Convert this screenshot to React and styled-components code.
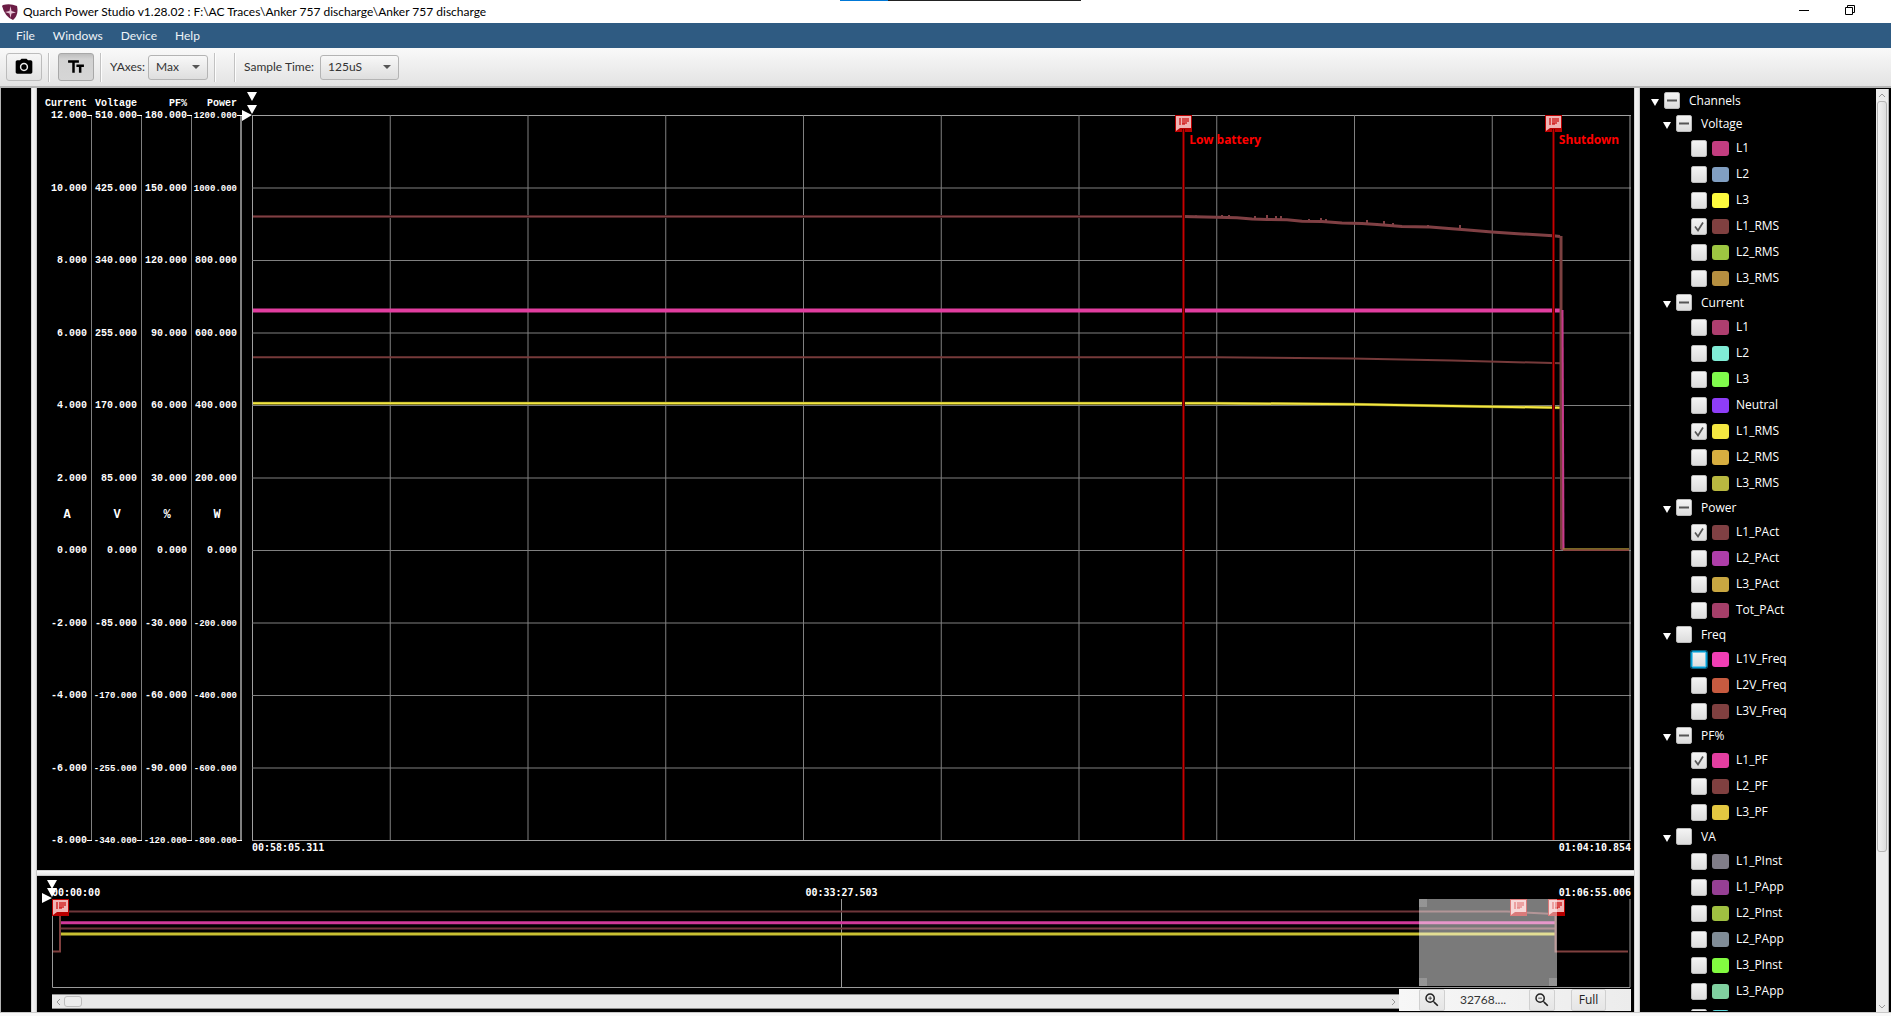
import React, { useState } from 'react';
import styled, { createGlobalStyle } from 'styled-components';
import { MdCameraAlt, MdTextFields, MdZoomIn, MdZoomOut } from 'react-icons/md';

const GlobalStyle = createGlobalStyle`
  * {
    box-sizing: border-box;
  }

  body {
    margin: 0;
    background: #f8f8f8;
    font-family: "Open Sans", "Noto Sans", sans-serif;
    font-size: 12px;
    line-height: 16px;
    overflow: hidden;
  }

  button, select, input {
    font: inherit;
    margin: 0;
  }
`

const Window = styled.div`
  display: flex;
  flex-direction: column;
  height: 100vh;
  padding-bottom: 3px;
`

const TitleBar = styled.header`
  position: relative;
  display: flex;
  align-items: center;
  height: 23px;
  flex: none;
  padding-left: 2px;
  background: #fff;
  color: #000;
  overflow: hidden;
`

const TitleText = styled.h1`
  flex: 1;
  margin: 0 0 0 5px;
  font-size: 12px;
  font-weight: 400;
  font-family: Lato, "Open Sans", sans-serif;
`

const DragStrip = styled.div`
  position: absolute;
  top: 0;
  left: 44.4%;
  width: 241px;
  height: 1px;
  background: linear-gradient(to right, #0078d7 48px, #222 48px);
`

const WindowButtons = styled.div`
  display: flex;
  margin-right: -28px;
  padding-bottom: 3px;
`

const WindowButton = styled.button`
  width: 46px;
  height: 20px;
  padding: 0;
  border: none;
  background: none;

  svg {
    display: block;
    margin: 0 auto;
  }
`

const MenuBar = styled.nav`
  display: flex;
  align-items: center;
  flex: none;
  height: 25px;
  padding-left: 7px;
  background: #2f5b82;
`

const MenuButton = styled.button`
  padding: 0 9px;
  border: none;
  background: none;
  color: #eef3f7;
  font-family: Lato, "Open Sans", sans-serif;
`

const Toolbar = styled.div`
  display: flex;
  align-items: center;
  flex: none;
  height: 40px;
  padding: 0 6px;
  border-bottom: 2px solid #b4b4b4;
  background: linear-gradient(#f9f9f9, #e3e3e3);
  color: #333;
  font-family: Lato, "Open Sans", sans-serif;
`

const ToolButton = styled.button`
  display: flex;
  align-items: center;
  justify-content: center;
  width: 36px;
  height: 28px;
  padding: 0;
  border: 1px solid ${props => props.$pressed ? '#a8a8a8' : '#bcbcbc'};
  border-radius: 3px;
  background: ${props => props.$pressed ? 'linear-gradient(#bdbdbd, #d2d2d2 20%, #d6d6d6)' : 'linear-gradient(#f6f6f6, #e2e2e2)'};
  color: #000;
`

const Separator = styled.div`
  width: 2px;
  height: 29px;
  margin: 0 ${props => props.$right || 8}px 0 6px;
  border-left: 1px solid #c2c2c2;
  border-right: 1px solid #fdfdfd;
`

const ToolLabel = styled.label`
  min-width: ${props => props.$width}px;
  margin-right: 3px;
`

const ComboBox = styled.div`
  display: grid;
  align-items: center;
  width: ${props => props.$width}px;
  height: 25px;

  select, svg {
    grid-area: 1 / 1;
  }

  svg {
    justify-self: end;
    margin-right: 8px;
    pointer-events: none;
  }
`

const ComboSelect = styled.select`
  width: 100%;
  height: 25px;
  padding: 0 7px;
  appearance: none;
  border: 1px solid #b4b4b4;
  border-radius: 3px;
  background: linear-gradient(#f8f8f8, #dedede);
  color: #333;
`

const Main = styled.main`
  display: flex;
  flex: 1;
  min-height: 0;
  border-left: 1px solid #b4b4b4;
  border-bottom: 1px solid #c8c8c8;
  background: #000;
`

const SidePanel = styled.div`
  width: 30px;
  flex: none;
`

const VerticalDivider = styled.div`
  width: 6px;
  flex: none;
  background: linear-gradient(to right, #bdbdbd, #f4f4f4 20%, #e8e8e8 80%, #b4b4b4);
`

const HorizontalDivider = styled.div`
  height: 6px;
  flex: none;
  background: linear-gradient(#bdbdbd, #fafafa 20%, #e8e8e8 80%, #b4b4b4);
`

const Charts = styled.div`
  display: flex;
  flex-direction: column;
  flex: 1;
  min-width: 0;
`

const TracePanel = styled.section`
  display: flex;
  flex: 1;
  min-height: 0;
  padding-right: 3px;
`

const Axes = styled.div`
  display: flex;
  padding: 10px 10px 0 5px;
  color: #fff;
  font-family: "Liberation Mono", "Courier New", monospace;
  font-weight: 700;
`

const Axis = styled.div`
  display: flex;
  flex-direction: column;
  width: 50px;
  padding-bottom: 23px;
`

const AxisTitle = styled.div`
  height: 12px;
  padding-right: 5px;
  font-size: 10px;
  line-height: 12px;
  text-align: right;
`

const AxisBody = styled.div`
  display: flex;
  flex: 1;
  justify-content: flex-end;
`

const AxisLabels = styled.div`
  display: flex;
  flex-direction: column;
  flex: 1;
  justify-content: space-between;
`

const AxisLabel = styled.div`
  height: 12px;
  font-size: ${props => props.$long ? 9 : 10}px;
  line-height: 12px;
  text-align: right;
  white-space: nowrap;
`

const AxisUnit = styled.div`
  height: 12px;
  padding-left: 5px;
  font-size: 12px;
  line-height: 12px;
  text-align: center;
`

const AxisRule = styled.div`
  width: 5px;
  margin: 5px 0 6px;
  border: solid #fff;
  border-width: 1px 0;
  box-shadow: inset ${props => props.$thick ? '-2px' : '-1px'} 0 0 #808080;
`

const Plot = styled.div`
  display: flex;
  flex-direction: column;
  flex: 1;
  min-width: 0;
  padding: 27px 0 15px;
`

const PlotArea = styled.div`
  position: relative;
  flex: 1;
  min-height: 0;

  > svg {
    display: block;
    width: 100%;
    height: 100%;
  }
`

const Times = styled.div`
  display: grid;
  grid-template-columns: 1fr auto 1fr;
  height: 14px;
  color: #fff;
  font-family: "DejaVu Sans Mono", monospace;
  font-weight: 700;
  font-size: 10px;
  line-height: 14px;

  time:last-child {
    grid-column: 3;
    text-align: right;
  }
`

const Marker = styled.div`
  position: absolute;
  top: 0;
  bottom: 0;
  left: ${props => props.$at}%;
  width: 17px;
  margin-left: -9px;
  color: #f00;
  font-family: "Noto Sans", "Open Sans", sans-serif;
  font-weight: 700;
  white-space: nowrap;

  svg {
    display: block;
  }
`

const MarkerLine = styled.div`
  position: absolute;
  top: 14px;
  bottom: 1px;
  left: 7px;
  width: 3px;
  background: linear-gradient(to right, #5a0000 1px, #c80000 1px, #c80000 2px, #5a0000 2px);
`

const MarkerText = styled.span`
  position: absolute;
  top: 17px;
  left: 14px;
`

const Cursors = styled.div`
  position: absolute;
  top: ${props => props.$top}px;
  left: -10px;

  svg {
    display: block;
  }
`

const Overview = styled.section`
  display: flex;
  flex-direction: column;
  flex: none;
  height: 136px;
  padding: 10px 3px 1px 15px;
`

const OverviewTimes = styled(Times)`
  height: 13px;
`

const Selection = styled.div`
  position: absolute;
  top: 0;
  bottom: 2px;
  left: 86.6%;
  width: 8.74%;
  background:
    linear-gradient(rgba(255, 255, 255, 0.2), rgba(255, 255, 255, 0.2)) top left / 8px 8px no-repeat,
    linear-gradient(rgba(255, 255, 255, 0.2), rgba(255, 255, 255, 0.2)) bottom left / 8px 8px no-repeat,
    linear-gradient(rgba(255, 255, 255, 0.2), rgba(255, 255, 255, 0.2)) bottom right / 8px 8px no-repeat,
    rgba(255, 255, 255, 0.48);
`

const OverviewFooter = styled.div`
  display: flex;
  align-items: flex-end;
  height: 23px;
  flex: none;
`

const TimeScroll = styled.div`
  display: flex;
  align-items: center;
  flex: 1;
  height: 15px;
  margin-bottom: 2px;
  border: solid #8f8f8f;
  border-width: 1px 0;
  background: #e8e8e8;
`

const ScrollButton = styled.button`
  display: flex;
  align-items: center;
  justify-content: center;
  width: 12px;
  height: 12px;
  padding: 0;
  border: none;
  background: none;
  color: #999;
`

const TimeThumb = styled.div`
  width: 18px;
  height: 11px;
  margin-right: auto;
  border: 1px solid #bdbdbd;
  border-radius: 3px;
  background: #ececec;
`

const ZoomBar = styled.div`
  display: flex;
  align-items: center;
  height: 22px;
  width: 232px;
  padding-left: 20px;
  background: linear-gradient(to right, #f7f7f7, #ececec);
  color: #333;
`

const ZoomButton = styled.button`
  display: flex;
  align-items: center;
  justify-content: center;
  width: ${props => props.$width || 26}px;
  height: 22px;
  margin-left: ${props => props.$gap || 0}px;
  padding: 0;
  border: 1px solid #d0d0d0;
  border-radius: 2px;
  background: linear-gradient(#f0f0f0, #e6e6e6);
  color: #222;
`

const ZoomValue = styled.output`
  width: 84px;
  padding-right: 8px;
  text-align: center;
  font-family: Lato, "Open Sans", sans-serif;
`

const TreePanel = styled.aside`
  display: flex;
  width: 251px;
  flex: none;
  padding-right: 2px;
`

const Tree = styled.div`
  flex: 1;
  margin-bottom: 1px;
  padding: 1px 0 0 11px;
  overflow: hidden;
  color: #fff;
`

const GroupRow = styled.div`
  display: flex;
  align-items: center;
  height: 23px;
  padding-left: ${props => props.$level * 12}px;
`

const ChannelRow = styled.div`
  display: flex;
  align-items: center;
  height: 26px;
  padding-left: 40px;
`

const Twisty = styled.button`
  width: 13px;
  height: 16px;
  padding: 3px 0 0;
  border: none;
  background: none;

  svg {
    display: block;
  }
`

const Tick = styled.span`
  display: grid;
  width: 16px;
  height: 17px;
  flex: none;

  input, svg {
    grid-area: 1 / 1;
  }

  svg {
    display: block;
    pointer-events: none;
  }
`

const TickInput = styled.input`
  width: 16px;
  height: 17px;
  appearance: none;
  border: 1px solid ${props => props.$focused ? '#039ed3' : '#bababa'};
  border-radius: 2px;
  background: linear-gradient(#f4f4f4, #dcdcdc);
  box-shadow: ${props => props.$focused ? '0 0 0 1px #0b5d7c, inset 0 0 0 1px #6fc6e6' : 'none'};
`

const Swatch = styled.span`
  width: 17px;
  height: 15px;
  margin: 0 7px 0 5px;
  border-radius: 3px;
  background: ${props => props.$color};
`

const GroupLabel = styled.label`
  margin-left: 9px;
`

const TreeScroll = styled.div`
  display: flex;
  flex-direction: column;
  align-items: center;
  width: 13px;
  flex: none;
  margin-top: 1px;
  background: #ececec;
  border-right: 1px solid #b4b4b4;
`

const TreeThumb = styled.div`
  width: 10px;
  flex: 0 0 81.4%;
  margin-bottom: auto;
  border: 1px solid #b4b4b4;
  border-radius: 3px;
  background: linear-gradient(to right, #f2f2f2, #dedede);
`

const axes = [
  { title: 'Current', unit: 'A', top: 12, step: 2 },
  { title: 'Voltage', unit: 'V', top: 510, step: 85 },
  { title: 'PF%', unit: '%', top: 180, step: 30 },
  { title: 'Power', unit: 'W', top: 1200, step: 200 },
];

const groups = [
  { name: 'Voltage', some: true, channels: [
    ['L1', '#c33d80'], ['L2', '#819fc2'], ['L3', '#fdfa3e'],
    ['L1_RMS', '#804040', true], ['L2_RMS', '#9dc641'], ['L3_RMS', '#b68f40'],
  ] },
  { name: 'Current', some: true, channels: [
    ['L1', '#ae3e6f'], ['L2', '#80ecd6'], ['L3', '#80fb4c'], ['Neutral', '#8e3df7'],
    ['L1_RMS', '#f4e741', true], ['L2_RMS', '#d7ae40'], ['L3_RMS', '#b9b840'],
  ] },
  { name: 'Power', some: true, channels: [
    ['L1_PAct', '#804043', true], ['L2_PAct', '#ae3ea9'], ['L3_PAct', '#c9a741'], ['Tot_PAct', '#a53f69'],
  ] },
  { name: 'Freq', some: false, channels: [
    ['L1V_Freq', '#f03eb4'], ['L2V_Freq', '#c75b40'], ['L3V_Freq', '#804040'],
  ] },
  { name: 'PF%', some: true, channels: [
    ['L1_PF', '#e23ea0', true], ['L2_PF', '#804040'], ['L3_PF', '#e3c741'],
  ] },
  { name: 'VA', some: false, channels: [
    ['L1_PInst', '#807d88'], ['L1_PApp', '#963f94'], ['L2_PInst', '#a0c041'],
    ['L2_PApp', '#808c97'], ['L3_PInst', '#82fb40'], ['L3_PApp', '#80d0a0'],
  ] },
];

// upper half of the axis is 6 divisions, lower half is 4
const divisions = [0, 1, 2, 3, 4, 5, 6, 7, 8, 9, 10];

const powerTail = '931,101.5 965,102.2 985,102.8 1000,104 1015,104.4 1035,104.8 1050,106.3 1070,106.5 1090,108 1110,108.6 1125,109.6 1150,111.4 1178,112 1200,113.7 1213,114.8 1240,117 1262,118.5 1285,119.8 1301,120.8 1308,121.6';

// short spikes that stand above the falling power trace
const powerSpikes = 'M944 102v-1.5M970 102v-2M977 102v-2M1003 104v-3M1015 104v-4M1024 104v-3M1029 104v-3M1057 106v-2M1069 106v-3M1074 106v-2M1115 108v-3M1132 110v-4M1141 111v-3M1176 112v-2M1208 114v-4';

function FlagIcon() {
  return (
    <svg width="17" height="17" viewBox="0 0 17 17">
      <rect width="17" height="17" fill="#b80000" />
      <path d="M1 1h15v12H5l-4 3z" fill="#f0b4b4" />
      <path d="M5 3v7M7 4h7M7 6h7M7 8h5M7 9h3" stroke="#d22828" strokeWidth="1.5" fill="none" />
    </svg>
  );
}

function Triangle({ color = '#fff', width = 8, height = 7 }) {
  return (
    <svg width={width} height={height} viewBox="0 0 10 10" preserveAspectRatio="none">
      <path d="M0 0h10L5 10z" fill={color} />
    </svg>
  );
}

function CheckBox({ id, checked, some, focused, label }) {
  const [on, setOn] = useState(!!checked);
  return (
    <Tick>
      <TickInput
        id={id}
        type="checkbox"
        aria-label={label}
        checked={on}
        $focused={focused}
        onChange={e => setOn(e.target.checked)}
      />
      <svg width="16" height="17" viewBox="0 0 16 17" fill="none" stroke="#555">
        {on && <path d="M4 8.5l3 4 5-8" strokeWidth="1.7" />}
        {some && !on && <path d="M3 8.5h10" strokeWidth="2" />}
      </svg>
    </Tick>
  );
}

function YAxis({ title, unit, top, step, last }) {
  const labels = [];
  divisions.forEach(n => {
    const text = (top - n * step).toFixed(3);
    labels.push(<AxisLabel key={n} $long={text.length > 7}>{text}</AxisLabel>);
    if (n < 10) {
      labels.push(<AxisUnit key={'u' + n}>{n === 5 ? unit : ''}</AxisUnit>);
    }
  });
  return (
    <Axis>
      <AxisTitle>{title}</AxisTitle>
      <AxisBody>
        <AxisLabels>{labels}</AxisLabels>
        <AxisRule $thick={last} />
      </AxisBody>
    </Axis>
  );
}

function MainTraces() {
  return (
    <svg viewBox="0 0 1379 726" preserveAspectRatio="none" fill="none">
      {divisions.map(n => (
        <g key={n} stroke={n % 10 === 0 ? '#a0a0a0' : '#808080'}>
          <path d={`M0 ${0.5 + n * 72.5}H1379`} />
          <path d={`M${0.5 + n * 137.75} 0V726`} />
        </g>
      ))}
      <path d="M1 101.5H931" stroke="#4a2224" strokeWidth="3" />
      <path d="M1 101.5H931" stroke="#804044" />
      <polyline points={powerTail} stroke="#804044" strokeWidth="3" />
      <path d={powerSpikes} stroke="#804044" strokeWidth="2" />
      <path d="M1 242.3H965L1100 243.6L1200 245.5L1309 248.3V434" stroke="#763a3a" strokeWidth="2" />
      <path d="M1 288.2H960L1100 289.2L1200 291L1309 292.7" stroke="#6f6a18" strokeWidth="3" />
      <path d="M1 288.2H960L1100 289.2L1200 291L1309 292.7" stroke="#f4e741" strokeWidth="2" />
      <path d="M1 195.4H1310" stroke="#e23ea0" strokeWidth="4" />
      <path d="M1309 121V300L1310 435" stroke="#7c4040" strokeWidth="3" />
      <path d="M1310.5 195L1311.5 435" stroke="#c83a8c" strokeWidth="2" />
      <path d="M1311 434H1377" stroke="#a08a30" strokeWidth="1.5" />
      <path d="M1311 435.3H1377" stroke="#8a4440" strokeWidth="1.5" />
    </svg>
  );
}

function OverviewTraces() {
  return (
    <svg viewBox="0 0 1579 89" preserveAspectRatio="none" fill="none">
      <path d="M0.5 0V88.5H1578V0M789.5 0V89" stroke="#9a9a9a" />
      <path d="M8 12.5H1455L1502 15" stroke="#6e363a" strokeWidth="2" />
      <path d="M8 23.7H1503" stroke="#d0389a" strokeWidth="3" />
      <path d="M8 29.5H1503" stroke="#6e363a" strokeWidth="2" />
      <path d="M8 35H1503" stroke="#c9c032" strokeWidth="3" />
      <path d="M1 52.5H8V12M1503.5 14V52.5H1576" stroke="#80403f" strokeWidth="2" />
    </svg>
  );
}

function App() {
  return (
    <Window>
      <GlobalStyle />
      <TitleBar>
        <svg width="16" height="18" viewBox="0 0 16 18">
          <path d="M1 2Q8 0 15 3Q17 12 11 17Q3 14 0 3z" fill="#6c1d45" />
          <path d="M8.5 3L9.5 8L14 9.5L9.5 10.5L8.5 15L7.5 10.5L3 9L7.5 8z" fill="#e8c8d8" />
        </svg>
        <TitleText>Quarch Power Studio v1.28.02 : F:\AC Traces\Anker 757 discharge\Anker 757 discharge</TitleText>
        <DragStrip />
        <WindowButtons>
          <WindowButton aria-label="Minimize">
            <svg width="10" height="10"><path d="M0 5.5h10" stroke="#000" /></svg>
          </WindowButton>
          <WindowButton aria-label="Restore">
            <svg width="10" height="10" fill="none" stroke="#000">
              <path d="M0.5 2.5h7v7h-7zM2.5 2V0.5h7v7H8" />
            </svg>
          </WindowButton>
          <WindowButton aria-label="Close">
            <svg width="10" height="10"><path d="M0 0l10 10M10 0L0 10" stroke="#000" /></svg>
          </WindowButton>
        </WindowButtons>
      </TitleBar>

      <MenuBar>
        <MenuButton>File</MenuButton>
        <MenuButton>Windows</MenuButton>
        <MenuButton>Device</MenuButton>
        <MenuButton>Help</MenuButton>
      </MenuBar>

      <Toolbar>
        <ToolButton aria-label="Screenshot"><MdCameraAlt size={20} /></ToolButton>
        <Separator />
        <ToolButton aria-label="Text size" $pressed><MdTextFields size={20} /></ToolButton>
        <Separator />
        <ToolLabel htmlFor="yaxes" $width={34}>YAxes:</ToolLabel>
        <ComboBox $width={60}>
          <ComboSelect id="yaxes"><option>Max</option></ComboSelect>
          <Triangle color="#555" width={8} height={4} />
        </ComboBox>
        <Separator $right={12} />
        <Separator />
        <ToolLabel htmlFor="sample" $width={73}>Sample Time:</ToolLabel>
        <ComboBox $width={79}>
          <ComboSelect id="sample"><option>125uS</option></ComboSelect>
          <Triangle color="#555" width={8} height={4} />
        </ComboBox>
      </Toolbar>

      <Main>
        <SidePanel />
        <VerticalDivider />
        <Charts>
          <TracePanel>
            <Axes>
              {axes.map((axis, i) => <YAxis key={axis.title} {...axis} last={i === 3} />)}
            </Axes>
            <Plot>
              <PlotArea>
                <MainTraces />
                <Marker $at={67.6}>
                  <MarkerLine />
                  <FlagIcon />
                  <MarkerText>Low battery</MarkerText>
                </Marker>
                <Marker $at={94.4}>
                  <MarkerLine />
                  <FlagIcon />
                  <MarkerText>Shutdown</MarkerText>
                </Marker>
                <Cursors $top={-23}>
                  <svg width="16" height="30" fill="#fff">
                    <path d="M5 0h10l-5 9zM5 13h10l-5 9zM0 18l10 5l-10 6z" />
                  </svg>
                </Cursors>
              </PlotArea>
              <Times>
                <time>00:58:05.311</time>
                <time>01:04:10.854</time>
              </Times>
            </Plot>
          </TracePanel>

          <HorizontalDivider />

          <Overview>
            <OverviewTimes>
              <time>00:00:00</time>
              <time>00:33:27.503</time>
              <time>01:06:55.006</time>
            </OverviewTimes>
            <PlotArea>
              <OverviewTraces />
              <Marker $at={0.6}><FlagIcon /></Marker>
              <Marker $at={92.9}><FlagIcon /></Marker>
              <Marker $at={95.3}><FlagIcon /></Marker>
              <Selection />
              <Cursors $top={-19}>
                <svg width="16" height="24" fill="#fff">
                  <path d="M5 0h10l-5 9zM5 8h10l-5 9zM0 13l10 5l-10 5z" />
                </svg>
              </Cursors>
            </PlotArea>
            <OverviewFooter>
              <TimeScroll>
                <ScrollButton aria-label="Scroll left">
                  <svg width="5" height="8" fill="none" stroke="currentColor"><path d="M4 1L1 4l3 3" /></svg>
                </ScrollButton>
                <TimeThumb />
                <ScrollButton aria-label="Scroll right">
                  <svg width="5" height="8" fill="none" stroke="currentColor"><path d="M1 1l3 3l-3 3" /></svg>
                </ScrollButton>
              </TimeScroll>
              <ZoomBar>
                <ZoomButton aria-label="Zoom in"><MdZoomIn size={18} /></ZoomButton>
                <ZoomValue>32768....</ZoomValue>
                <ZoomButton aria-label="Zoom out"><MdZoomOut size={18} /></ZoomButton>
                <ZoomButton $width={35} $gap={16}>Full</ZoomButton>
              </ZoomBar>
            </OverviewFooter>
          </Overview>
        </Charts>
        <VerticalDivider />

        <TreePanel>
          <Tree>
            <GroupRow $level={0}>
              <Twisty aria-label="Collapse Channels"><Triangle /></Twisty>
              <CheckBox id="channels" some />
              <GroupLabel htmlFor="channels">Channels</GroupLabel>
            </GroupRow>
            {groups.map(group => (
              <React.Fragment key={group.name}>
                <GroupRow $level={1}>
                  <Twisty aria-label={'Collapse ' + group.name}><Triangle /></Twisty>
                  <CheckBox id={group.name} some={group.some} />
                  <GroupLabel htmlFor={group.name}>{group.name}</GroupLabel>
                </GroupRow>
                {group.channels.map(([name, color, checked]) => (
                  <ChannelRow key={name}>
                    <CheckBox id={group.name + name} checked={checked} focused={name === 'L1V_Freq'} />
                    <Swatch $color={color} />
                    <label htmlFor={group.name + name}>{name}</label>
                  </ChannelRow>
                ))}
              </React.Fragment>
            ))}
            <ChannelRow>
              <CheckBox id="more" label="Next channel" />
              <Swatch $color="#5fd8dc" />
            </ChannelRow>
          </Tree>
          <TreeScroll>
            <ScrollButton aria-label="Scroll up">
              <svg width="8" height="5" fill="none" stroke="currentColor"><path d="M1 4l3-3l3 3" /></svg>
            </ScrollButton>
            <TreeThumb />
            <ScrollButton aria-label="Scroll down">
              <svg width="8" height="5" fill="none" stroke="currentColor"><path d="M1 1l3 3l3-3" /></svg>
            </ScrollButton>
          </TreeScroll>
        </TreePanel>
      </Main>
    </Window>
  );
}

export default App;
